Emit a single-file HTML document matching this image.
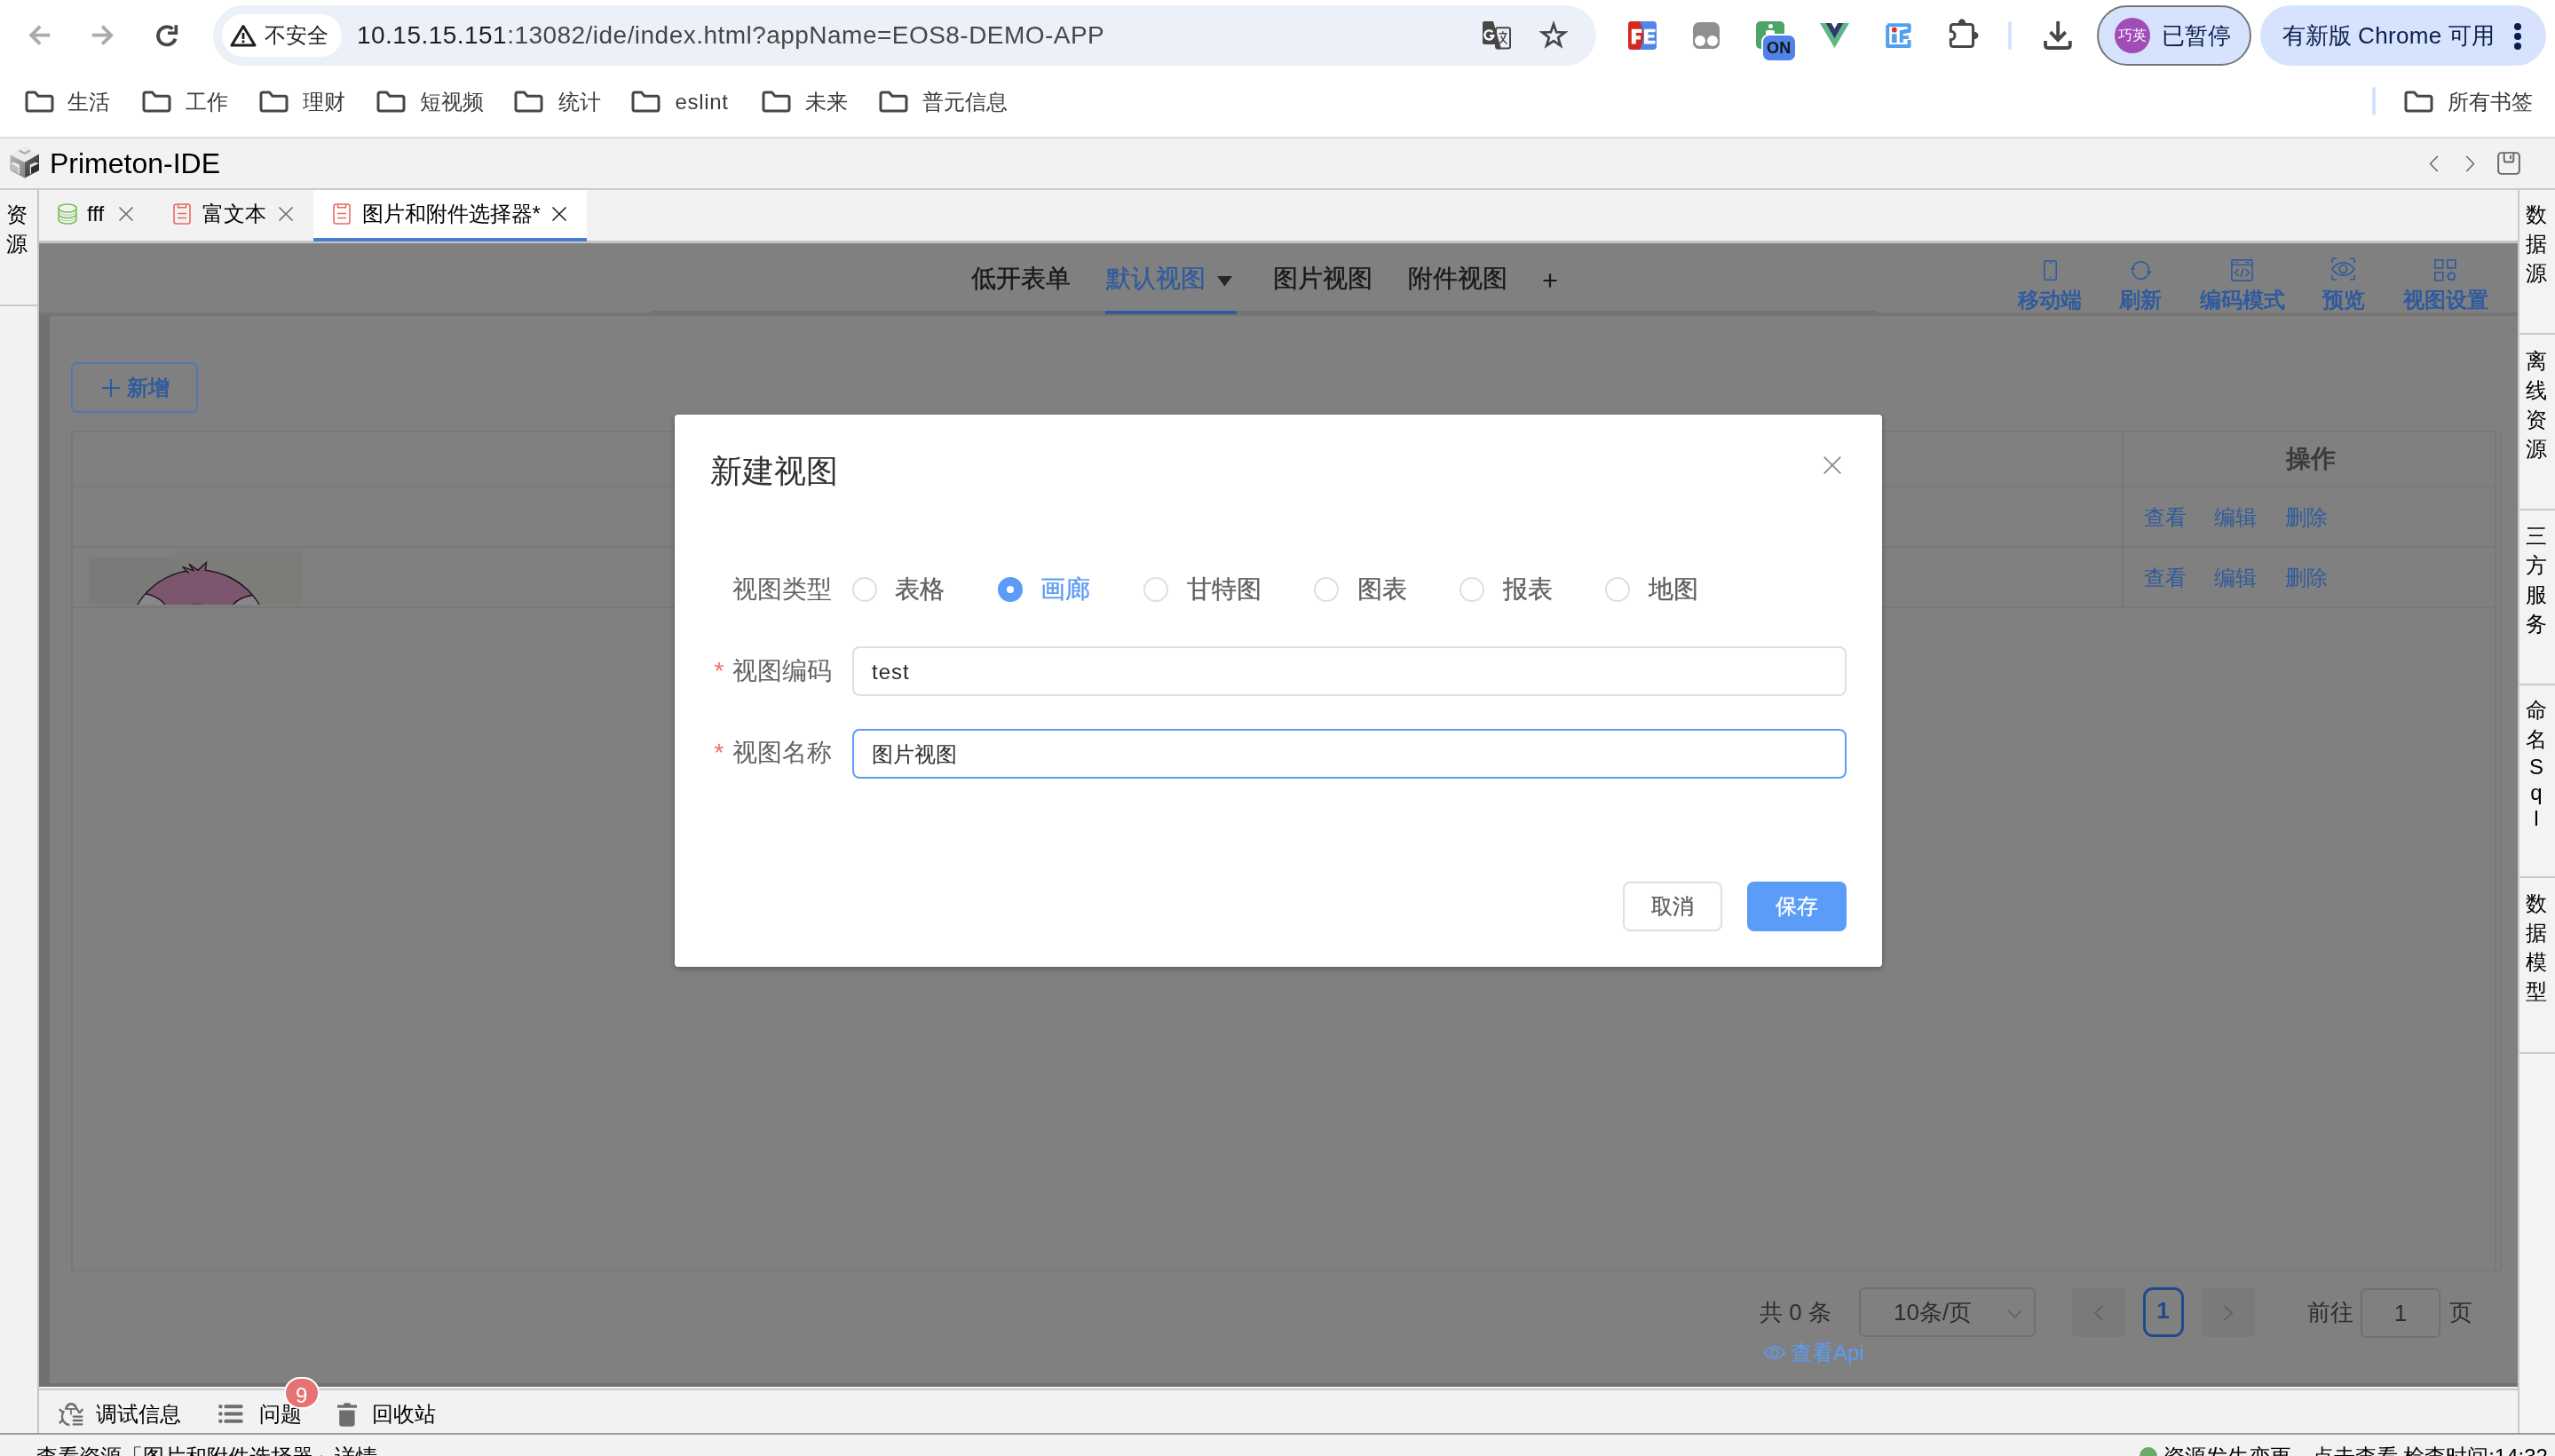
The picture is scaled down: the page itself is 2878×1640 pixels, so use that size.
<!DOCTYPE html>
<html lang="zh">
<head>
<meta charset="utf-8">
<title>Primeton-IDE</title>
<style>
*{box-sizing:border-box;margin:0;padding:0}
html,body{width:2878px;height:1640px;overflow:hidden;background:#f2f2f2}
body{position:relative;will-change:transform;font-family:"Liberation Sans",sans-serif;color:#000}
.a{position:absolute}
.t{position:absolute;white-space:nowrap;line-height:1}
svg{position:absolute;overflow:visible}
.c{display:inline-block;width:1em;text-align:center}
/* ---------- chrome ---------- */
#chrome{left:0;top:0;width:2878px;height:154px;background:#fff}
#chromeline{left:0;top:154px;width:2878px;height:2px;background:#dcdcdc}
#urlbar{left:240px;top:6px;width:1558px;height:68px;border-radius:34px;background:#ecf0f8}
#chip{left:250px;top:16px;width:135px;height:48px;border-radius:24px;background:#fff}
.bm{font-size:24px;color:#3c3c3c;top:103px;height:24px;line-height:24px}
/* ---------- ide ---------- */
#idehead{left:0;top:156px;width:2878px;height:56px;background:#f2f2f2}
#ideline{left:0;top:212px;width:2878px;height:2px;background:#cbcbcb}
#leftp{left:0;top:214px;width:42px;height:1400px;background:#f2f2f2}
#leftb{left:42px;top:214px;width:2px;height:1400px;background:#c6c6c6}
#rightp{left:2838px;top:214px;width:40px;height:1400px;background:#f3f3f3}
#rightb{left:2836px;top:214px;width:2px;height:1400px;background:#c9c9c9}
.vt{position:absolute;font-size:24px;line-height:33px;width:24px;text-align:center;color:#000}
.sep{position:absolute;height:2px;background:#c9c9c9}
#tabbar{left:44px;top:214px;width:2792px;height:58px;background:#f2f2f2}
#tabline{left:44px;top:271px;width:2792px;height:3px;background:#c4c4c4}
#tabact{left:353px;top:214px;width:308px;height:54px;background:#fff}
#tabul{left:353px;top:268px;width:308px;height:4px;background:#4a7dd0}
.tb{font-size:24px;top:229px;height:24px;line-height:24px;color:#000}
/* ---------- dark area ---------- */
#dark{left:44px;top:274px;width:2792px;height:1288px;background:#717171;overflow:hidden}
#tool{left:0;top:0;width:2792px;height:78px;background:#808080}
#toolb{left:0;top:78px;width:2792px;height:4px;background:#777474}
#panel{left:12px;top:82px;width:2761px;height:1202px;background:#808080}
.vtab{font-size:28px;-webkit-text-stroke:0.350px;top:300px;height:28px;line-height:28px;color:#181818}
.tl{font-size:24px;font-weight:bold;color:#2f5b9e;top:326px;height:24px;line-height:24px}
.lnk{font-size:24px;color:#2f5b9e;height:24px;line-height:24px}
.hl{position:absolute;height:2px;background:#76787b}
.vl{position:absolute;width:2px;background:#76787b}
.pg{font-size:26px;color:#2d2d2d;top:1465px;height:26px;line-height:26px}
/* ---------- modal ---------- */
#modal{left:760px;top:467px;width:1360px;height:622px;background:#fff;border-radius:4px;box-shadow:0 2px 6px rgba(0,0,0,.3)}
.lab{font-size:28px;color:#606266;height:28px;line-height:28px}
.rad{position:absolute;width:28px;height:28px;border-radius:50%;border:2px solid #dcdfe6;background:#fff}
.inp{position:absolute;left:960px;width:1120px;height:56px;border:2px solid #dcdfe6;border-radius:8px;background:#fff}
.ast{font-size:28px;color:#f56c6c;height:28px;line-height:28px}
/* ---------- bottom ---------- */
#botline1{left:44px;top:1564px;width:2792px;height:2px;background:#c9c9c9}
#bottabs{left:44px;top:1566px;width:2792px;height:48px;background:#f2f2f2}
#botline2{left:0;top:1614px;width:2878px;height:2px;background:#9c9c9c}
#status{left:0;top:1616px;width:2878px;height:24px;background:#f2f2f2}
.bt{font-size:24px;color:#000;top:1581px;height:24px;line-height:24px}
.st{font-size:24px;color:#000;top:1629px;height:24px;line-height:24px}
</style>
</head>
<body>
<!-- CHROME -->
<div id="chrome" class="a">
<!-- nav -->
<svg style="left:20px;top:20px" width="40" height="40" viewBox="20 20 40 40"><path d="M56.200 39.700H35.500M45.200 29.700L35.200 39.700L45.200 49.700" fill="none" stroke="#ababab" stroke-width="3.800"/></svg>
<svg style="left:95px;top:20px" width="40" height="40" viewBox="95 20 40 40"><path d="M103.900 39.700H125M115.200 29.700L125.200 39.700L115.200 49.700" fill="none" stroke="#ababab" stroke-width="3.800"/></svg>
<svg style="left:168px;top:20px" width="40" height="40" viewBox="168 20 40 40"><path d="M197.600 43.750A10.100 10.100 0 1 1 194.600 32.560" fill="none" stroke="#474747" stroke-width="3.800"/><path d="M189 37.300H198.300V28.300" fill="none" stroke="#474747" stroke-width="3.600"/></svg>
<div id="urlbar" class="a"></div>
<div id="chip" class="a"></div>
<svg style="left:259px;top:27px" width="30" height="26" viewBox="0 0 30 26"><path d="M15 2.5 L28 24 H2 Z" fill="none" stroke="#1f1f1f" stroke-width="3" stroke-linejoin="round"/><rect x="13.6" y="10" width="2.8" height="7" fill="#1f1f1f"/><rect x="13.6" y="18.5" width="2.8" height="2.8" fill="#1f1f1f"/></svg>
<div class="t" style="left:298px;top:28px;font-size:24px;height:24px;line-height:24px;color:#1f1f1f"><span class="c">不</span><span class="c">安</span><span class="c">全</span></div>
<div class="t" id="url" style="left:402px;top:25px;font-size:28px;letter-spacing:0.470px;height:30px;line-height:30px;color:#474747"><span style="color:#1f1f1f">10.15.15.151</span>:13082/ide/index.html?appName=EOS8-DEMO-APP</div>
<!-- translate -->
<svg style="left:1669px;top:23px" width="34" height="34" viewBox="0 0 34 34"><rect x="16" y="8.300" width="16" height="23.300" rx="2" fill="#ecf0f8" stroke="#474747" stroke-width="2"/><path d="M1 3.100Q1 1.100 3 1.100H13L22.100 32.200H17.400L15.600 26.900H3Q1 26.900 1 24.900Z" fill="#474747"/><path d="M12.300 13.300A5 5 0 1 0 13.300 17.300H9" fill="none" stroke="#fff" stroke-width="2.400"/><path d="M19.500 14.800H28.500M23.800 12.300V14.800M27 14.800C26 19.500 23.500 23.500 20 26M21.500 17.500C23 21 25.500 24 28.500 26.500" fill="none" stroke="#474747" stroke-width="1.500"/></svg>
<!-- star -->
<svg style="left:1730.750px;top:20px" width="38" height="40" viewBox="0 0 38 40"><path d="M19.00 3.00L23.14 14.90L35.74 15.16L25.70 22.78L29.35 34.84L19.00 27.64L8.65 34.84L12.30 22.78L2.26 15.16L14.86 14.90ZM19.00 11.60L21.27 17.47L27.56 17.82L22.68 21.80L24.29 27.88L19.00 24.47L13.71 27.88L15.32 21.80L10.44 17.82L16.73 17.47Z" fill="#474747" fill-rule="evenodd"/></svg>
<!-- FE -->
<div class="a" style="left:1834px;top:24px;width:32px;height:32px;border-radius:4px;overflow:hidden;background:#4f86e8"><div class="a" style="left:-20px;top:-16px;width:37px;height:64px;border-radius:0 32px 32px 0;background:#d7281f"></div><svg style="left:0;top:0" width="32" height="32" viewBox="0 0 32 32"><path d="M3.800 8.800h11.500v4.200H8.800v3.200h5.200v4.200H8.800v5H3.800zM18 8.800h12.500v3.400H22.500v3h7v3.300h-7v3.300h8V25.400H18z" fill="#fff"/></svg></div>
<!-- tamper -->
<div class="a" style="left:1906.500px;top:25px;width:30.500px;height:30px;border-radius:7px;background:#8f8f8f"></div>
<div class="a" style="left:1909px;top:40px;width:12px;height:12px;border-radius:50%;background:#fff"></div>
<div class="a" style="left:1923px;top:40px;width:12px;height:12px;border-radius:50%;background:#fff"></div>
<!-- green ON -->
<div class="a" style="left:1977.500px;top:24px;width:32.500px;height:31px;border-radius:5px;background:#4ea467"></div>
<div class="a" style="left:1992px;top:27px;width:5px;height:5px;border-radius:50%;background:#fff"></div>
<div class="a" style="left:1989px;top:34px;width:10px;height:8px;border-radius:2px;background:#fff"></div>
<div class="a" style="left:1985.500px;top:40px;width:36.500px;height:27.500px;border-radius:7px;background:#4f83e9;box-shadow:0 0 0 2px #fff"></div>
<div class="t" style="left:1985.500px;top:45px;width:36.500px;text-align:center;font-size:18px;font-weight:bold;height:18px;line-height:18px;color:#161616;letter-spacing:0.300px">ON</div>
<!-- vue -->
<svg style="left:2049.500px;top:26px" width="33" height="28" viewBox="0 0 33 28"><path d="M0 0H6.500L16.500 17.500 26.500 0H33L16.500 28z" fill="#5cb887"/><path d="M6.500 0H12.800L16.500 6.500 20.200 0H26.500L16.500 17.500z" fill="#2f3b63"/></svg>
<!-- iE -->
<svg style="left:2123.500px;top:26px" width="29" height="28" viewBox="0 0 29 28"><path d="M2.200 2.200H26.600V9H21V7.500M26.600 19V26H2.200V2.200" fill="none" stroke="#52a0ef" stroke-width="4" stroke-linejoin="round"/><rect x="7" y="12.300" width="5.600" height="9.800" fill="#52a0ef"/><circle cx="9.800" cy="7.700" r="2.900" fill="#e8302a"/><path d="M15.800 8h8v3.800h-4v2.500H26v3.800h-6.200v4H15.800z" fill="#52a0ef"/></svg>
<!-- puzzle -->
<svg style="left:2195px;top:21px" width="36" height="34" viewBox="0 0 36 34"><path d="M5.300 6.500H24.500Q27.500 6.500 27.500 9.500V28.500Q27.500 31.500 24.500 31.500H5.300Q2.300 31.500 2.300 28.500V23.700A4.700 4.700 0 0 0 2.300 14.300V9.500Q2.300 6.500 5.300 6.500Z" fill="none" stroke="#474747" stroke-width="3"/><path d="M10.700 6A4.300 5.700 0 0 1 19.300 6ZM28.500 14.800A5 4.200 0 0 1 28.500 23.200Z" fill="#474747"/></svg>
<div class="a" style="left:2262px;top:24px;width:4px;height:32px;border-radius:2px;background:#d3e3fd"></div>
<!-- download -->
<svg style="left:2302px;top:24px" width="33" height="32" viewBox="0 0 33 32"><path d="M16.150 0.100V21M7.600 12.100L16.150 20.900L24.700 12.100" fill="none" stroke="#474747" stroke-width="3.800"/><path d="M2 21.900V27Q2 30 5 30H26.800Q29.800 30 29.800 27V21.900" fill="none" stroke="#474747" stroke-width="3.800"/></svg>
<!-- profile -->
<div class="a" style="left:2362px;top:6px;width:174px;height:68px;border-radius:34px;background:#d7e3fc;border:2px solid #747775"></div>
<div class="a" style="left:2382px;top:20px;width:40px;height:40px;border-radius:50%;background:#a14cb7"></div>
<div class="t" style="left:2382px;top:32px;width:40px;text-align:center;font-size:16px;height:16px;line-height:16px;color:#fff"><span class="c">巧</span><span class="c">英</span></div>
<div class="t" style="left:2435px;top:27px;font-size:26px;height:26px;line-height:26px;color:#0a1f4d"><span class="c">已</span><span class="c">暂</span><span class="c">停</span></div>
<div class="a" style="left:2546px;top:6px;width:322px;height:68px;border-radius:34px;background:#d7e3fc"></div>
<div class="t" id="upd" style="left:2570.500px;top:27px;font-size:26px;letter-spacing:0.350px;height:26px;line-height:26px;color:#0a1f4d"><span class="c">有</span><span class="c">新</span><span class="c">版</span> Chrome <span class="c">可</span><span class="c">用</span></div>
<div class="a" style="left:2832px;top:25.500px;width:8px;height:8px;border-radius:50%;background:#0a1f4d"></div>
<div class="a" style="left:2832px;top:36.500px;width:8px;height:8px;border-radius:50%;background:#0a1f4d"></div>
<div class="a" style="left:2832px;top:47.500px;width:8px;height:8px;border-radius:50%;background:#0a1f4d"></div>
<!-- bookmarks -->
<svg style="left:27.5px;top:102px" width="33" height="25" viewBox="0 0 33 25"><path d="M2 4.2 Q2 2 4.2 2 H11.5 L15 6.2 H28.8 Q31 6.2 31 8.4 V20.8 Q31 23 28.8 23 H4.2 Q2 23 2 20.8 Z" fill="none" stroke="#474747" stroke-width="3" stroke-linejoin="round"/></svg>
<div class="t bm" style="left:76px"><span class="c">生</span><span class="c">活</span></div>
<svg style="left:159.5px;top:102px" width="33" height="25" viewBox="0 0 33 25"><path d="M2 4.2 Q2 2 4.2 2 H11.5 L15 6.2 H28.8 Q31 6.2 31 8.4 V20.8 Q31 23 28.8 23 H4.2 Q2 23 2 20.8 Z" fill="none" stroke="#474747" stroke-width="3" stroke-linejoin="round"/></svg>
<div class="t bm" style="left:208.5px"><span class="c">工</span><span class="c">作</span></div>
<svg style="left:291.5px;top:102px" width="33" height="25" viewBox="0 0 33 25"><path d="M2 4.2 Q2 2 4.2 2 H11.5 L15 6.2 H28.8 Q31 6.2 31 8.4 V20.8 Q31 23 28.8 23 H4.2 Q2 23 2 20.8 Z" fill="none" stroke="#474747" stroke-width="3" stroke-linejoin="round"/></svg>
<div class="t bm" style="left:340.5px"><span class="c">理</span><span class="c">财</span></div>
<svg style="left:423.5px;top:102px" width="33" height="25" viewBox="0 0 33 25"><path d="M2 4.2 Q2 2 4.2 2 H11.5 L15 6.2 H28.8 Q31 6.2 31 8.4 V20.8 Q31 23 28.8 23 H4.2 Q2 23 2 20.8 Z" fill="none" stroke="#474747" stroke-width="3" stroke-linejoin="round"/></svg>
<div class="t bm" style="left:472.5px"><span class="c">短</span><span class="c">视</span><span class="c">频</span></div>
<svg style="left:579px;top:102px" width="33" height="25" viewBox="0 0 33 25"><path d="M2 4.2 Q2 2 4.2 2 H11.5 L15 6.2 H28.8 Q31 6.2 31 8.4 V20.8 Q31 23 28.8 23 H4.2 Q2 23 2 20.8 Z" fill="none" stroke="#474747" stroke-width="3" stroke-linejoin="round"/></svg>
<div class="t bm" style="left:628.5px"><span class="c">统</span><span class="c">计</span></div>
<svg style="left:711px;top:102px" width="33" height="25" viewBox="0 0 33 25"><path d="M2 4.2 Q2 2 4.2 2 H11.5 L15 6.2 H28.8 Q31 6.2 31 8.4 V20.8 Q31 23 28.8 23 H4.2 Q2 23 2 20.8 Z" fill="none" stroke="#474747" stroke-width="3" stroke-linejoin="round"/></svg>
<div class="t bm" style="left:760.5px;letter-spacing:0.700px">eslint</div>
<svg style="left:857.5px;top:102px" width="33" height="25" viewBox="0 0 33 25"><path d="M2 4.2 Q2 2 4.2 2 H11.5 L15 6.2 H28.8 Q31 6.2 31 8.4 V20.8 Q31 23 28.8 23 H4.2 Q2 23 2 20.8 Z" fill="none" stroke="#474747" stroke-width="3" stroke-linejoin="round"/></svg>
<div class="t bm" style="left:906.5px"><span class="c">未</span><span class="c">来</span></div>
<svg style="left:989.5px;top:102px" width="33" height="25" viewBox="0 0 33 25"><path d="M2 4.2 Q2 2 4.2 2 H11.5 L15 6.2 H28.8 Q31 6.2 31 8.4 V20.8 Q31 23 28.8 23 H4.2 Q2 23 2 20.8 Z" fill="none" stroke="#474747" stroke-width="3" stroke-linejoin="round"/></svg>
<div class="t bm" style="left:1038.5px"><span class="c">普</span><span class="c">元</span><span class="c">信</span><span class="c">息</span></div>
<div class="a" style="left:2672px;top:98px;width:4px;height:32px;border-radius:2px;background:#d3e3fd"></div>
<svg style="left:2707.5px;top:102px" width="33" height="25" viewBox="0 0 33 25"><path d="M2 4.2 Q2 2 4.2 2 H11.5 L15 6.2 H28.8 Q31 6.2 31 8.4 V20.8 Q31 23 28.8 23 H4.2 Q2 23 2 20.8 Z" fill="none" stroke="#474747" stroke-width="3" stroke-linejoin="round"/></svg>
<div class="t bm" style="left:2756.5px"><span class="c">所</span><span class="c">有</span><span class="c">书</span><span class="c">签</span></div>
</div>
<div id="chromeline" class="a"></div>
<!-- IDE -->
<div id="idehead" class="a">
<svg style="left:11px;top:9px" width="34" height="36" viewBox="0 0 34 36"><defs><linearGradient id="lg1" x1="0" y1="0" x2="1" y2="1"><stop offset="0" stop-color="#b4b4b4"/><stop offset="1" stop-color="#858585"/></linearGradient><linearGradient id="lg2" x1="0" y1="0" x2="1" y2="1"><stop offset="0" stop-color="#6e6e6e"/><stop offset="1" stop-color="#262626"/></linearGradient></defs>
<path d="M16.800 0 L33 8.600 L16.800 17.800 L0.500 9.600Z" fill="#ebebeb"/>
<path d="M0.500 9.600 L16.800 17.800 V35.600 L0.500 27Z" fill="url(#lg1)"/>
<path d="M33 8.600 L16.800 17.800 V35.600 L33 27Z" fill="url(#lg2)"/>
<path d="M10.500 3.300 L16.800 6.600 L23 3.300 L23 5.800 L16.800 9.200 L10.500 5.800Z" fill="#aeaeae"/>
<path d="M0.500 19.300 L10 24 V30.500 L0.500 26Z" fill="#bdbdbd"/><path d="M0.500 19.300 L4.500 17.600 L10.500 20.600 L10 24Z" fill="#e9e9e9"/><path d="M10.300 20.500V31" stroke="#efefef" stroke-width="1.300"/>
<path d="M33 19 L24 23.600 V30.500 L33 26.500Z" fill="#2e2e2e"/><path d="M24 23.600 L23.500 20.300 L28.500 17.800 L33 19Z" fill="#e0e0e0"/><path d="M23.400 20V31" stroke="#efefef" stroke-width="1.300"/>
</svg>
<div class="t" style="left:56px;top:11px;font-size:32px;height:34px;line-height:34px;color:#000">Primeton-IDE</div>
<svg style="left:2735.500px;top:18.500px" width="11" height="19" viewBox="0 0 11 19"><path d="M9.800 1L1.500 9.500l8.300 8.500" fill="none" stroke="#666" stroke-width="1.500"/></svg>
<svg style="left:2777px;top:18.500px" width="11" height="19" viewBox="0 0 11 19"><path d="M1.200 1L9.500 9.500l-8.300 8.500" fill="none" stroke="#666" stroke-width="1.500"/></svg>
<svg style="left:2813px;top:15px" width="26" height="26" viewBox="0 0 27 27"><rect x="1.200" y="1.200" width="24.600" height="24.600" rx="3.500" fill="none" stroke="#666" stroke-width="2"/><path d="M8 1.500v8q0 2.500 2.500 2.500h6q2.500 0 2.500-2.500v-8" fill="none" stroke="#666" stroke-width="2"/><path d="M15.500 4v4.500" stroke="#666" stroke-width="2"/></svg>
</div>
<div id="ideline" class="a"></div>
<div id="leftp" class="a">
<div class="vt" style="left:7px;top:225px;top:11px"><span class="c">资</span><br><span class="c">源</span></div>
<div class="sep" style="left:0;top:129px;width:42px"></div>
</div>
<div id="leftb" class="a"></div>
<div id="rightp" class="a">
<div class="vt" style="left:7px;top:11px"><span class="c">数</span><br><span class="c">据</span><br><span class="c">源</span></div>
<div class="sep" style="left:0;top:161px;width:40px"></div>
<div class="vt" style="left:7px;top:176px"><span class="c">离</span><br><span class="c">线</span><br><span class="c">资</span><br><span class="c">源</span></div>
<div class="sep" style="left:0;top:359px;width:40px"></div>
<div class="vt" style="left:7px;top:373px"><span class="c">三</span><br><span class="c">方</span><br><span class="c">服</span><br><span class="c">务</span></div>
<div class="sep" style="left:0;top:556px;width:40px"></div>
<div class="vt" style="left:7px;top:569px"><span class="c">命</span><br><span class="c">名</span></div>
<div class="vt" style="left:7px;top:635px;line-height:29px">S<br>q<br>l</div>
<div class="sep" style="left:0;top:773px;width:40px"></div>
<div class="vt" style="left:7px;top:787px"><span class="c">数</span><br><span class="c">据</span><br><span class="c">模</span><br><span class="c">型</span></div>
<div class="sep" style="left:0;top:971px;width:40px"></div>
</div>
<div id="rightb" class="a"></div>
<div id="tabbar" class="a"></div>
<div id="tabline" class="a"></div>
<div id="tabact" class="a"></div>
<div id="tabul" class="a"></div>
<svg style="left:65px;top:229px" width="22" height="24" viewBox="0 0 22 24"><ellipse cx="11" cy="5.500" rx="10" ry="4.500" fill="none" stroke="#7cc05a" stroke-width="1.600"/><path d="M1 5.500v13c0 2.500 4.500 4.500 10 4.500s10-2 10-4.500v-13M1 12c0 2.500 4.500 4.500 10 4.500s10-2 10-4.500M1 18.500" fill="none" stroke="#7cc05a" stroke-width="1.600"/><path d="M1 8.700c0 2.500 4.500 4.500 10 4.500s10-2 10-4.500M1 15.200c0 2.500 4.500 4.500 10 4.500s10-2 10-4.500" fill="none" stroke="#7cc05a" stroke-width="0.800" opacity="0.800"/></svg>
<div class="t tb" style="left:98px">fff</div>
<svg style="left:133.5px;top:233px" width="16" height="16" viewBox="0 0 16 16"><path d="M0.500 0.500L15.500 15.500M15.500 0.500L0.500 15.500" stroke="#6b6b6b" stroke-width="1.600"/></svg><svg style="left:195px;top:229px" width="20" height="24" viewBox="0 0 20 24"><rect x="1" y="1" width="18" height="22" rx="2.500" fill="none" stroke="#e86a67" stroke-width="1.600"/><path d="M5.500 1v3.800h9V1" fill="none" stroke="#e86a67" stroke-width="1.600"/><path d="M5 11.500h10M5 16.500h10" stroke="#e86a67" stroke-width="1.600"/></svg>
<div class="t tb" style="left:228px"><span class="c">富</span><span class="c">文</span><span class="c">本</span></div>
<svg style="left:313.5px;top:233px" width="16" height="16" viewBox="0 0 16 16"><path d="M0.500 0.500L15.500 15.500M15.500 0.500L0.500 15.500" stroke="#6b6b6b" stroke-width="1.600"/></svg><svg style="left:375px;top:229px" width="20" height="24" viewBox="0 0 20 24"><rect x="1" y="1" width="18" height="22" rx="2.500" fill="none" stroke="#e86a67" stroke-width="1.600"/><path d="M5.500 1v3.800h9V1" fill="none" stroke="#e86a67" stroke-width="1.600"/><path d="M5 11.500h10M5 16.500h10" stroke="#e86a67" stroke-width="1.600"/></svg>
<div class="t tb" style="left:407.500px"><span class="c">图</span><span class="c">片</span><span class="c">和</span><span class="c">附</span><span class="c">件</span><span class="c">选</span><span class="c">择</span><span class="c">器</span>*</div>
<svg style="left:621.5px;top:233px" width="16" height="16" viewBox="0 0 16 16"><path d="M0.500 0.500L15.500 15.500M15.500 0.500L0.500 15.500" stroke="#222" stroke-width="1.600"/></svg>
<!-- DARK -->
<div id="dark" class="a">
<div id="tool" class="a"></div>
<div id="toolb" class="a"></div>
<div class="a" style="left:690px;top:76px;width:1380px;height:4px;background:#727377"></div>
<div id="panel" class="a"></div>
<div class="a" style="left:2773px;top:82px;width:19px;height:1202px;background:#808080"></div>
<div class="t vtab" style="left:1050px;top:26px;color:#181818"><span class="c">低</span><span class="c">开</span><span class="c">表</span><span class="c">单</span></div>
<div class="t vtab" style="left:1201.5px;top:26px;color:#2f5b9e"><span class="c">默</span><span class="c">认</span><span class="c">视</span><span class="c">图</span></div>
<div class="t vtab" style="left:1389.5px;top:26px;color:#181818"><span class="c">图</span><span class="c">片</span><span class="c">视</span><span class="c">图</span></div>
<div class="t vtab" style="left:1541.5px;top:26px;color:#181818"><span class="c">附</span><span class="c">件</span><span class="c">视</span><span class="c">图</span></div>
<svg style="left:1326.5px;top:37px" width="17" height="12" viewBox="0 0 17 12"><path d="M0 0h17L8.500 11.500z" fill="#262626"/></svg>
<svg style="left:1694px;top:34px" width="16" height="16" viewBox="0 0 16 16"><path d="M8 0.500v15M0.500 8h15" stroke="#181818" stroke-width="2.200"/></svg>
<div class="a" style="left:1201px;top:76px;width:148px;height:4px;background:#2f5b9e"></div>
<div class="t tl" style="left:2228.5px;top:52px"><span class="c">移</span><span class="c">动</span><span class="c">端</span></div>
<div class="t tl" style="left:2343px;top:52px"><span class="c">刷</span><span class="c">新</span></div>
<div class="t tl" style="left:2433.5px;top:52px"><span class="c">编</span><span class="c">码</span><span class="c">模</span><span class="c">式</span></div>
<div class="t tl" style="left:2572px;top:52px"><span class="c">预</span><span class="c">览</span></div>
<div class="t tl" style="left:2662.5px;top:52px"><span class="c">视</span><span class="c">图</span><span class="c">设</span><span class="c">置</span></div>
<svg style="left:2257.5px;top:18.5px" width="15" height="23" viewBox="0 0 15 23"><rect x="0.800" y="0.800" width="13.400" height="21.400" rx="2.500" fill="none" stroke="#2f5b9e" stroke-width="1.500"/><path d="M5.500 3h4" stroke="#2f5b9e" stroke-width="1.200"/><circle cx="7.500" cy="19.300" r="0.900" fill="#2f5b9e"/></svg>
<svg style="left:2354.5px;top:19.5px" width="25" height="21" viewBox="0 0 25 21"><path d="M3.300 8.200A9.300 9.300 0 0 1 21.700 10.500M21.700 12.800A9.300 9.300 0 0 1 3.300 10.500" fill="none" stroke="#2f5b9e" stroke-width="1.600"/><path d="M0.300 9.800l3-3.800 3 3.800zM24.700 11.200l-3 3.800-3-3.800z" fill="#2f5b9e"/></svg>
<svg style="left:2468.5px;top:17.5px" width="25" height="25" viewBox="0 0 25 25"><rect x="0.900" y="0.900" width="23.200" height="23.200" rx="1" fill="none" stroke="#2f5b9e" stroke-width="1.600"/><path d="M1 6.300h23" stroke="#2f5b9e" stroke-width="1.400"/><path d="M3.500 3.600h2M7 3.600h2M16 3.600h5" stroke="#2f5b9e" stroke-width="1.400"/><path d="M8.500 11l-4 4 4 4M16.500 11l4 4-4 4M14 10l-3 10" fill="none" stroke="#2f5b9e" stroke-width="1.600"/></svg>
<svg style="left:2581.5px;top:16px" width="27" height="26" viewBox="0 0 27 26"><path d="M0.900 6V3.500Q0.900 1 3.500 1H6M21 1h2.500q2.600 0 2.600 2.500V6M26.100 20v2.500q0 2.500-2.600 2.500H21M6 25H3.500Q0.900 25 0.900 22.500V20" fill="none" stroke="#2f5b9e" stroke-width="1.700"/><path d="M1 13C4.500 7.500 9 5.800 13.500 5.800S22.500 7.500 26 13C22.500 18.500 18 20.200 13.500 20.200S4.500 18.500 1 13Z" fill="none" stroke="#2f5b9e" stroke-width="1.700"/><circle cx="13.500" cy="13" r="4.300" fill="none" stroke="#2f5b9e" stroke-width="1.700"/></svg>
<svg style="left:2697.5px;top:17.5px" width="25" height="25" viewBox="0 0 25 25"><rect x="0.800" y="0.800" width="9" height="9" fill="none" stroke="#2f5b9e" stroke-width="1.600"/><rect x="14.800" y="0.800" width="9" height="9" fill="none" stroke="#2f5b9e" stroke-width="1.600"/><rect x="0.800" y="14.800" width="9" height="9" fill="none" stroke="#2f5b9e" stroke-width="1.600"/><circle cx="19.300" cy="19.300" r="3.600" fill="none" stroke="#2f5b9e" stroke-width="1.600"/><path d="M19.300 13.800v2M19.300 22.800v2M13.800 19.300h2M22.800 19.300h2M15.400 15.400l1.400 1.400M21.800 21.800l1.400 1.400M23.200 15.400l-1.400 1.400M16.800 21.800l-1.400 1.400" stroke="#2f5b9e" stroke-width="1.600"/></svg>
<div class="a" style="left:36px;top:134px;width:143px;height:57px;border:2px solid #5478ac;border-radius:6px"></div>
<svg style="left:70.5px;top:152.5px" width="20" height="20" viewBox="0 0 20 20"><path d="M10 0v20M0 10h20" stroke="#2f5b9e" stroke-width="2"/></svg>
<div class="t lnk" style="left:99px;top:150.5px;font-weight:bold"><span class="c">新</span><span class="c">增</span></div>
<div class="hl" style="left:36px;top:211px;width:2732px"></div>
<div class="hl" style="left:36px;top:273px;width:2732px"></div>
<div class="hl" style="left:36px;top:341px;width:2732px"></div>
<div class="hl" style="left:36px;top:409px;width:2732px"></div>
<div class="hl" style="left:36px;top:1156px;width:2738px"></div>
<div class="vl" style="left:36px;top:211px;height:947px"></div>
<div class="vl" style="left:2346px;top:211px;height:200px"></div>
<div class="vl" style="left:2766px;top:211px;height:947px"></div>
<div class="vl" style="left:2772px;top:211px;height:947px"></div>
<div class="t" style="left:2530.5px;top:229px;font-size:28px;font-weight:bold;height:28px;line-height:28px;color:#3a3a3a"><span class="c">操</span><span class="c">作</span></div>
<div class="t lnk" style="left:2370.5px;top:296.5px"><span class="c">查</span><span class="c">看</span></div>
<div class="t lnk" style="left:2450px;top:296.5px"><span class="c">编</span><span class="c">辑</span></div>
<div class="t lnk" style="left:2529.5px;top:296.5px"><span class="c">删</span><span class="c">除</span></div>
<div class="t lnk" style="left:2370.5px;top:364.5px"><span class="c">查</span><span class="c">看</span></div>
<div class="t lnk" style="left:2450px;top:364.5px"><span class="c">编</span><span class="c">辑</span></div>
<div class="t lnk" style="left:2529.5px;top:364.5px"><span class="c">删</span><span class="c">除</span></div>
<div class="a" style="left:56px;top:347px;width:240px;height:60px;overflow:hidden">
<svg style="left:0;top:0" width="240" height="60" viewBox="0 0 240 60"><rect x="0" y="6.500" width="98" height="53.500" fill="#787b78"/><rect x="97" y="0" width="143" height="60" fill="#7c7d78"/>
<circle cx="123.500" cy="100.700" r="79.700" fill="#7c556e" stroke="#1d1418" stroke-width="1.500"/>
<clipPath id="hc"><circle cx="123.500" cy="100.700" r="79"/></clipPath><g clip-path="url(#hc)"><path d="M60 47C72 48.500 82 54 86.500 61L40 62Z" fill="#8b868a" stroke="#1d1418" stroke-width="1.300"/><path d="M187 49C175 50.500 166 55 162 61L208 62Z" fill="#8b868a" stroke="#1d1418" stroke-width="1.300"/></g>
<path d="M112.500 24.500L105.500 17.500L118 21.500L112.800 14.200L123 21.300L132.500 12.500L131.500 21.500" fill="#7c556e" stroke="#1d1418" stroke-width="1.300" stroke-linejoin="miter"/>
<ellipse cx="121.500" cy="61" rx="8" ry="2.500" fill="#6f3a5e"/></svg></div>
<div class="t pg" style="left:1938px;top:1191px"><span class="c">共</span> 0 <span class="c">条</span></div>
<div class="a" style="left:2050px;top:1176px;width:199px;height:56px;border:2px solid #6d7075;border-radius:6px"></div>
<div class="t pg" style="left:2089px;top:1191px">10<span class="c">条</span>/<span class="c">页</span></div>
<svg style="left:2216.5px;top:1201px" width="17" height="10" viewBox="0 0 17 10"><path d="M0.800 0.800l7.700 8 7.700-8" fill="none" stroke="#606060" stroke-width="1.600"/></svg>
<div class="a" style="left:2290px;top:1176px;width:60px;height:56px;border-radius:5px;background:#7a7a7a"></div>
<svg style="left:2313.5px;top:1195.5px" width="12" height="18" viewBox="0 0 12 18"><path d="M10.500 1L2 9l8.500 8" fill="none" stroke="#60646c" stroke-width="2"/></svg>
<div class="a" style="left:2370px;top:1176px;width:46px;height:56px;border:3px solid #1f4b8d;border-radius:11px"></div>
<div class="t" style="left:2370px;top:1189px;width:45px;text-align:center;font-size:26px;font-weight:bold;height:26px;line-height:26px;color:#1f4b8d">1</div>
<div class="a" style="left:2436px;top:1176px;width:60px;height:56px;border-radius:5px;background:#7a7a7a"></div>
<svg style="left:2460px;top:1195.5px" width="12" height="18" viewBox="0 0 12 18"><path d="M1.500 1L10 9l-8.500 8" fill="none" stroke="#60646c" stroke-width="2"/></svg>
<div class="t pg" style="left:2554.5px;top:1191px"><span class="c">前</span><span class="c">往</span></div>
<div class="a" style="left:2615px;top:1177px;width:90px;height:56px;border:2px solid #6d7075;border-radius:6px"></div>
<div class="t pg" style="left:2615px;top:1192px;width:90px;text-align:center">1</div>
<div class="t pg" style="left:2714.5px;top:1191px"><span class="c">页</span></div>
<svg style="left:1943px;top:1242px" width="24" height="15" viewBox="0 0 24 15"><path d="M0.800 7.500C4 2.500 8 0.800 12 0.800S20 2.500 23.200 7.500C20 12.500 16 14.200 12 14.200S4 12.500 0.800 7.500Z" fill="none" stroke="#5a9cf8" stroke-width="1.600"/><circle cx="12" cy="7.500" r="4" fill="none" stroke="#5a9cf8" stroke-width="1.600"/></svg>
<div class="t" style="left:1973px;top:1237px;font-size:24px;height:26px;line-height:26px;color:#5a9cf8"><span class="c">查</span><span class="c">看</span>Api</div>
<div class="a" style="left:0;top:1284px;width:2792px;height:4px;background:#717171"></div>
</div>
<!-- MODAL -->
<div id="modal" class="a"></div>
<div class="t" style="left:800px;top:512.500px;font-size:36px;height:36px;line-height:36px;color:#303133"><span class="c">新</span><span class="c">建</span><span class="c">视</span><span class="c">图</span></div>
<svg style="left:2054px;top:514px" width="20" height="20" viewBox="0 0 20 20"><path d="M0.700 0.700L19.300 19.300M19.300 0.700L0.700 19.300" stroke="#8a8d93" stroke-width="1.800"/></svg>
<div class="t lab" style="left:824.500px;top:649.500px"><span class="c">视</span><span class="c">图</span><span class="c">类</span><span class="c">型</span></div>
<div class="rad" style="left:960px;top:650px"></div>
<div class="t lab" style="left:1008px;top:649.500px;-webkit-text-stroke:0.350px"><span class="c">表</span><span class="c">格</span></div>
<div class="rad" style="left:1124px;top:650px;border-color:#5b9cf8;background:#5b9cf8"></div><div class="a" style="left:1134px;top:660px;width:8px;height:8px;border-radius:50%;background:#fff"></div>
<div class="t lab" style="left:1172px;top:649.500px;-webkit-text-stroke:0.350px;color:#5b9cf8"><span class="c">画</span><span class="c">廊</span></div>
<div class="rad" style="left:1288px;top:650px"></div>
<div class="t lab" style="left:1337px;top:649.500px;-webkit-text-stroke:0.350px"><span class="c">甘</span><span class="c">特</span><span class="c">图</span></div>
<div class="rad" style="left:1480px;top:650px"></div>
<div class="t lab" style="left:1528.5px;top:649.500px;-webkit-text-stroke:0.350px"><span class="c">图</span><span class="c">表</span></div>
<div class="rad" style="left:1644px;top:650px"></div>
<div class="t lab" style="left:1692.5px;top:649.500px;-webkit-text-stroke:0.350px"><span class="c">报</span><span class="c">表</span></div>
<div class="rad" style="left:1808px;top:650px"></div>
<div class="t lab" style="left:1856.5px;top:649.500px;-webkit-text-stroke:0.350px"><span class="c">地</span><span class="c">图</span></div>
<div class="t ast" style="left:804.500px;top:741.500px">*</div>
<div class="t lab" style="left:824.500px;top:741.500px"><span class="c">视</span><span class="c">图</span><span class="c">编</span><span class="c">码</span></div>
<div class="inp" style="top:728px"></div>
<div class="t" style="left:982px;top:744px;font-size:24px;letter-spacing:1px;height:26px;line-height:26px;color:#2b2b2b">test</div>
<div class="t ast" style="left:804.500px;top:834px">*</div>
<div class="t lab" style="left:824.500px;top:834px"><span class="c">视</span><span class="c">图</span><span class="c">名</span><span class="c">称</span></div>
<div class="inp" style="top:821px;border-color:#5b9cf8"></div>
<div class="t" style="left:982px;top:838px;font-size:24px;height:24px;line-height:24px;color:#2b2b2b"><span class="c">图</span><span class="c">片</span><span class="c">视</span><span class="c">图</span></div>
<div class="a" style="left:1828px;top:993px;width:112px;height:56px;border:2px solid #dcdfe6;border-radius:8px;background:#fff"></div>
<div class="t" style="left:1828px;top:1008.500px;width:112px;text-align:center;font-size:24px;height:24px;line-height:24px;-webkit-text-stroke:0.350px;color:#606266"><span class="c">取</span><span class="c">消</span></div>
<div class="a" style="left:1968px;top:993px;width:112px;height:56px;border-radius:8px;background:#5b9cf8"></div>
<div class="t" style="left:1968px;top:1008.500px;width:112px;text-align:center;font-size:24px;height:24px;line-height:24px;-webkit-text-stroke:0.350px;color:#fff"><span class="c">保</span><span class="c">存</span></div>
<!-- BOTTOM -->
<div id="botline1" class="a"></div>
<div id="bottabs" class="a"></div>
<svg style="left:66px;top:1580px" width="29" height="26" viewBox="0 0 29 26"><path d="M8.600 7A5.600 5.600 0 0 1 19.800 7" fill="none" stroke="#6e6e6e" stroke-width="2.800"/><path d="M7 7H21.500" stroke="#6e6e6e" stroke-width="1.800"/><path d="M14 7V13.500" stroke="#6e6e6e" stroke-width="1.700"/><path d="M6.200 9.300C3.300 12.500 3.200 17.500 5.600 21S10 24.800 12.300 25" fill="none" stroke="#6e6e6e" stroke-width="2.300"/><path d="M0.800 7.200L5 11.200M0.800 23.200L5 19.200M27.300 7L23.300 11.800M20.500 7.300C22.300 8.300 22.800 10 23.300 11.800" fill="none" stroke="#6e6e6e" stroke-width="2.300"/><path d="M16.800 15.600H26.400M16.800 20H26.400M16.800 24.400H26.400" stroke="#6e6e6e" stroke-width="2.300" stroke-linecap="round"/></svg>
<div class="t bt" style="left:107.500px"><span class="c">调</span><span class="c">试</span><span class="c">信</span><span class="c">息</span></div>
<svg style="left:245.500px;top:1582px" width="28" height="21" viewBox="0 0 28 21"><rect x="0.400" y="0.3" width="3.900" height="4" rx="1" fill="#6e6e6e"/><rect x="6.500" y="0.3" width="21" height="4" rx="1.500" fill="#6e6e6e"/><rect x="0.400" y="8.5" width="3.900" height="4" rx="1" fill="#6e6e6e"/><rect x="6.500" y="8.5" width="21" height="4" rx="1.500" fill="#6e6e6e"/><rect x="0.400" y="16.8" width="3.900" height="4" rx="1" fill="#6e6e6e"/><rect x="6.500" y="16.8" width="21" height="4" rx="1.500" fill="#6e6e6e"/></svg>
<div class="t bt" style="left:291.500px"><span class="c">问</span><span class="c">题</span></div>
<div class="a" style="left:320px;top:1551px;width:39.500px;height:36px;border-radius:18px;background:#e57373;border:2px solid #fff"></div>
<div class="t" style="left:320px;top:1560px;width:39.500px;text-align:center;font-size:24px;height:24px;line-height:24px;color:#fff">9</div>
<svg style="left:380px;top:1579.500px" width="22" height="27" viewBox="0 0 22 27"><path d="M0 2.500h22v3.300H0zM6.800 2.500L8 0.300h6L15.200 2.500z" fill="#6e6e6e"/><path d="M2.200 8.500h17.400V23.500q0 3.200-3.200 3.200H5.400Q2.200 26.700 2.200 23.500z" fill="#6e6e6e"/></svg>
<div class="t bt" style="left:418.500px"><span class="c">回</span><span class="c">收</span><span class="c">站</span></div>
<div id="botline2" class="a"></div>
<div id="status" class="a"></div>
<div class="t st" style="left:40.500px"><span class="c">查</span><span class="c">看</span><span class="c">资</span><span class="c">源</span><span class="c">「</span><span class="c">图</span><span class="c">片</span><span class="c">和</span><span class="c">附</span><span class="c">件</span><span class="c">选</span><span class="c">择</span><span class="c">器</span><span class="c">」</span><span class="c">详</span><span class="c">情</span></div>
<div class="a" style="left:2410px;top:1630px;width:20px;height:20px;border-radius:50%;background:#6aaa6c"></div>
<div class="t st" id="stR" style="left:2436.500px"><span class="c">资</span><span class="c">源</span><span class="c">发</span><span class="c">生</span><span class="c">变</span><span class="c">更</span><span class="c">，</span><span class="c">点</span><span class="c">击</span><span class="c">查</span><span class="c">看</span> <span class="c">检</span><span class="c">查</span><span class="c">时</span><span class="c">间</span>:14:32</div>
</body>
</html>
